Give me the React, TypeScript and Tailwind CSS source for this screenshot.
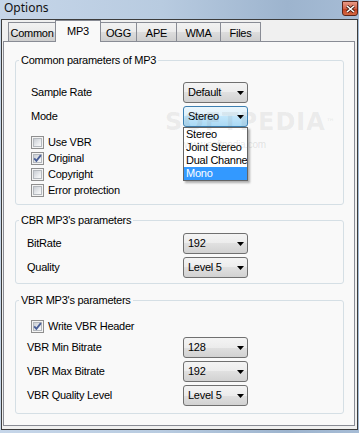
import React from 'react'

const tabs = [
  { name: 'Common', w: 'w-[48px]' },
  { name: 'MP3', w: 'w-[46px]', active: true },
  { name: 'OGG', w: 'w-[37px]' },
  { name: 'APE', w: 'w-[41px]' },
  { name: 'WMA', w: 'w-[45px]' },
  { name: 'Files', w: 'w-[41px]' },
]

function Combo({ value, focused, children }: { value: string; focused?: boolean; children?: React.ReactNode }) {
  return (
    <div
      className={`relative flex h-[21px] w-[65px] items-center rounded-[3px] border pl-[4px] ${
        focused
          ? 'border-[#3c7fb1] bg-[linear-gradient(#ecf7fd_0%,#dcf1fc_50%,#c1e6fb_50%,#aad9f4_100%)]'
          : 'border-[#707070] bg-[linear-gradient(#f4f4f4_0%,#ececec_50%,#e0e0e0_50%,#d2d2d2_100%)]'
      }`}
    >
      <span className="leading-[13px]">{value}</span>
      <svg className="absolute right-[3px] top-[8px]" width="7" height="4" viewBox="0 0 7 4">
        <path d="M0 0h7L3.5 4z" fill="#000" />
      </svg>
      {children}
    </div>
  )
}

function Check({ checked }: { checked?: boolean }) {
  return (
    <div className="relative h-[13px] w-[13px] shrink-0 border border-[#8f8f8f] bg-[#f4f4f4] p-[1px]">
      <div className="h-full w-full border border-[#b4b8bd] bg-[linear-gradient(135deg,#c9cdd3,#eef0f2_70%,#f8f8f8)]" />
      {checked && (
        <svg className="absolute left-0 top-0" width="11" height="11" viewBox="0 0 11 11">
          <path d="M2.2 5.4L4.4 7.8L8.9 2.2" fill="none" stroke="#4a5f97" strokeWidth="1.9" />
        </svg>
      )}
    </div>
  )
}

function CheckRow({ label, checked }: { label: string; checked?: boolean }) {
  return (
    <div className="flex h-[16px] items-center gap-[4px]">
      <Check checked={checked} />
      <span className="leading-[13px]">{label}</span>
    </div>
  )
}

function Group({ title, className, children }: { title: string; className: string; children: React.ReactNode }) {
  return (
    <fieldset className={`mx-[11px] mr-[10px] rounded-[3px] border border-[#d5dfe5] ${className}`}>
      <legend className="ml-[3px] px-[2px] leading-[13px]">{title}</legend>
      {children}
    </fieldset>
  )
}

export default function App() {
  return (
    <div className="relative flex h-[433px] w-[359px] flex-col bg-[linear-gradient(90deg,#c6d6e9,#b8cbe0_45%,#9db4ce_80%,#a6bcd5)] px-[1px] pb-[3px] font-['Liberation_Sans',Arial,sans-serif] text-[11px] tracking-[-0.25px] text-black">
      {/* title bar */}
      <div className="flex h-[19px] items-start">
        <span className="pl-[3px] font-['Noto_Sans',sans-serif] text-[12px] leading-[16px] tracking-normal text-[#111]">Options</span>
        <div className="ml-auto mt-[1px] flex h-[15px] w-[16px] items-center justify-center rounded-b-[3px] border border-[#5a2418] bg-[linear-gradient(#e89a86,#d2634a_50%,#c2401f_55%,#d46a45)]">
          <svg width="9" height="8" viewBox="0 0 9 8">
            <path d="M1 1L8 7M8 1L1 7" stroke="#3a1a12" strokeWidth="3" />
            <path d="M1 1L8 7M8 1L1 7" stroke="#fff" strokeWidth="1.6" />
          </svg>
        </div>
      </div>

      {/* client */}
      <div className="flex flex-1 flex-col border border-[#3c3c3c] bg-[#f0f0f0]">
        <div className="relative z-10 flex h-[21px] items-end pl-[6px]">
          {tabs.map((t) =>
            t.active ? (
              <div
                key={t.name}
                className={`${t.w} -mb-px -ml-px h-[22px] border border-b-0 border-[#898c95] bg-[#f9f9f9] pt-[4px] text-center leading-[13px]`}
              >
                {t.name}
              </div>
            ) : (
              <div
                key={t.name}
                className={`${t.w} -ml-px first:ml-0 h-[19px] border border-b-0 border-[#898c95] bg-[linear-gradient(#f2f2f2,#ebebeb_50%,#dddddd_50%,#cfcfcf)] pt-[4px] text-center leading-[13px]`}
              >
                {t.name}
              </div>
            )
          )}
        </div>

        <div className="mb-[3px] ml-[1px] mr-[2px] flex flex-1 flex-col border border-[#898c95] bg-[#f9f9f9]">
          <Group title="Common parameters of MP3" className="mt-[12px] pb-[6px]">
            <div className="flex flex-col gap-[3px] pl-[15px] pt-[15px]">
              <div className="flex items-center">
                <span className="w-[152px] leading-[13px]">Sample Rate</span>
                <Combo value="Default" />
              </div>
              <div className="relative z-20 flex items-center">
                <span className="w-[152px] leading-[13px]">Mode</span>
                <Combo value="Stereo" focused>
                  <div className="absolute left-[-1px] top-[20px] w-[65px] border border-[#646464] bg-white shadow-[2px_2px_2px_rgba(0,0,0,0.3)]">
                    <div className="h-[13px] overflow-hidden whitespace-nowrap px-[2px] leading-[13px]">Stereo</div>
                    <div className="h-[13px] overflow-hidden whitespace-nowrap px-[2px] leading-[13px]">Joint Stereo</div>
                    <div className="h-[13px] overflow-hidden whitespace-nowrap px-[2px] leading-[13px]">Dual Channel</div>
                    <div className="h-[13px] overflow-hidden whitespace-nowrap bg-[#3399ff] px-[2px] leading-[13px] text-white">Mono</div>
                  </div>
                </Combo>
              </div>
            </div>
            <div className="mt-[7px] flex flex-col pl-[15px]">
              <CheckRow label="Use VBR" />
              <CheckRow label="Original" checked />
              <CheckRow label="Copyright" />
              <CheckRow label="Error protection" />
            </div>
          </Group>

          <Group title="CBR MP3's parameters" className="mt-[9px] pb-[5px]">
            <div className="flex flex-col gap-[3px] pl-[11px] pt-[6px]">
              <div className="flex items-center">
                <span className="w-[156px] leading-[13px]">BitRate</span>
                <Combo value="192" />
              </div>
              <div className="flex items-center">
                <span className="w-[156px] leading-[13px]">Quality</span>
                <Combo value="Level 5" />
              </div>
            </div>
          </Group>

          <Group title="VBR MP3's parameters" className="mt-[10px] pb-[7px]">
            <div className="pl-[15px] pt-[11px]">
              <CheckRow label="Write VBR Header" checked />
            </div>
            <div className="mt-[3px] flex flex-col gap-[3px] pl-[11px]">
              <div className="flex items-center">
                <span className="w-[156px] leading-[13px]">VBR Min Bitrate</span>
                <Combo value="128" />
              </div>
              <div className="flex items-center">
                <span className="w-[156px] leading-[13px]">VBR Max Bitrate</span>
                <Combo value="192" />
              </div>
              <div className="flex items-center">
                <span className="w-[156px] leading-[13px]">VBR Quality Level</span>
                <Combo value="Level 5" />
              </div>
            </div>
          </Group>
        </div>
      </div>

      {/* watermark */}
      <div className="pointer-events-none absolute left-[165px] top-[109px] z-30 font-['DejaVu_Sans',sans-serif] text-[24px] font-bold leading-[26px] tracking-[1px] text-[rgba(110,110,110,0.11)]">
        SOFTPEDIA<span className="align-top text-[9px]">™</span>
      </div>
      <div className="pointer-events-none absolute left-[184px] top-[139px] z-30 text-[10px] leading-[12px] text-[rgba(110,110,110,0.18)]">
        www.softpedia.com
      </div>
    </div>
  )
}
